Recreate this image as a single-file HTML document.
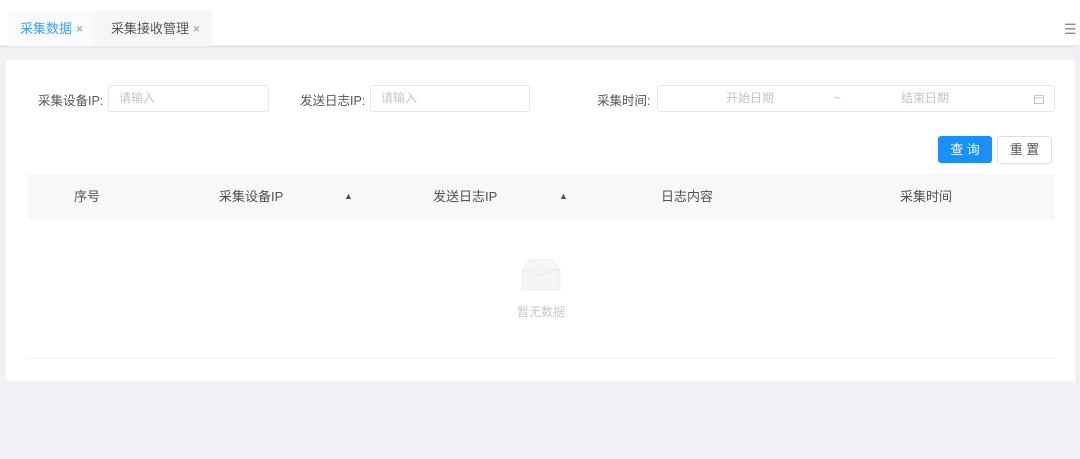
<!DOCTYPE html>
<html><head><meta charset="utf-8"><style>
*{margin:0;padding:0;box-sizing:border-box}
body{width:1080px;height:459px;background:#f0f2f5;font-family:"Liberation Sans","Noto Sans CJK SC",sans-serif;font-size:13px;color:#606266;position:relative;overflow:hidden}
.top{position:absolute;left:0;top:0;width:1080px;height:10px;background:#fff}
.tabs{position:absolute;left:0;top:10px;width:1080px;height:36px;background:#fff;border-bottom:1px solid #e8e8e8;box-shadow:0 2px 4px rgba(0,0,0,.05)}
.tab{position:absolute;top:0;height:36px;line-height:38px;font-size:13px}
.card{position:absolute;left:6px;top:60px;width:1069px;height:321px;background:#fff}
.abs{position:absolute}
.lbl{position:absolute;top:90px;color:#555;font-size:12.5px}
.inp{position:absolute;height:27px;border:1px solid #e4e7ed;border-radius:3px;color:#c0c4cc;font-size:12px;line-height:25px;padding-left:10px}
.th{position:absolute;top:186px;font-size:13px;color:#505050}
</style></head><body>
<div class="top"></div>
<div class="tabs">
<div class="tab" style="left:8px;width:87px;background:#fafbfc;padding-left:12px;color:#409eff">采集数据 <span style="color:#999">×</span></div>
<div class="tab" style="left:95px;width:117px;background:#f5f6f7;padding-left:16px;color:#555">采集接收管理 <span style="color:#999">×</span></div>
<div class="tab" style="left:1064px;color:#888;font-size:14px">☰</div>
</div>
<div style="position:absolute;left:1075px;top:46px;width:5px;height:413px;background:#eef0f3"></div>
<div class="card"></div>
<div class="lbl" style="left:38px">采集设备IP:</div>
<div class="inp" style="left:108px;top:85px;width:161px">请输入</div>
<div class="lbl" style="left:300px">发送日志IP:</div>
<div class="inp" style="left:370px;top:85px;width:160px">请输入</div>
<div class="lbl" style="left:597px">采集时间:</div>
<div class="inp" style="left:657px;top:85px;width:398px;padding:0">
<span class="abs" style="left:68px;top:0">开始日期</span><span class="abs" style="left:176px;top:0">~</span><span class="abs" style="left:243px;top:0">结束日期</span>
<svg class="abs" style="left:375px;top:7px" width="12" height="12" viewBox="0 0 12 12"><rect x="1.5" y="2.5" width="9" height="8" fill="none" stroke="#c0c4cc"/><line x1="1.5" y1="5" x2="10.5" y2="5" stroke="#c0c4cc"/></svg>
</div>
<div class="abs" style="left:938px;top:136px;width:54px;height:27px;background:#1890ff;border-radius:3px;color:#fff;text-align:center;line-height:27px">查 询</div>
<div class="abs" style="left:997px;top:136px;width:55px;height:28px;border:1px solid #dcdfe6;border-radius:3px;color:#555;text-align:center;line-height:26px">重 置</div>
<div class="abs" style="left:28px;top:174px;width:1027px;height:46px;background:#f8f8f9"></div>
<div class="th" style="left:74px">序号</div>
<div class="th" style="left:219px">采集设备IP</div>
<div class="th" style="left:344px;font-size:9px;top:191px">▲</div>
<div class="th" style="left:433px">发送日志IP</div>
<div class="th" style="left:559px;font-size:9px;top:191px">▲</div>
<div class="th" style="left:661px">日志内容</div>
<div class="th" style="left:900px">采集时间</div>
<svg class="abs" style="left:520px;top:258px" width="42" height="34" viewBox="0 0 42 34"><path d="M2 12 L10 2 H32 L40 12 V32 H2 Z" fill="#f5f5f7" stroke="#ececec"/><path d="M2 12 H14 Q15 17 21 17 Q27 17 28 12 H40" fill="none" stroke="#e6e6e6"/></svg>
<div class="abs" style="left:517px;top:303px;font-size:12px;color:#c8c8c8">暂无数据</div>
<div class="abs" style="left:28px;top:358px;width:1027px;height:1px;background:#f3f3f3"></div>
</body></html>
